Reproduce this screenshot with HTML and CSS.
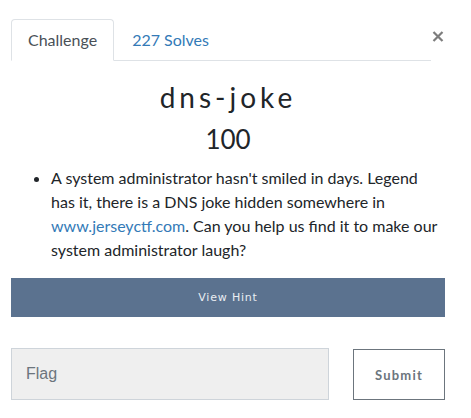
FILE: index.html
```html
<!DOCTYPE html>
<html>
<head>
<meta charset="utf-8">
<link rel="stylesheet" href="styles.css">
</head>
<body>
<div class="modal">
  <div class="tabs-row">
    <ul class="nav">
      <li class="tab active">Challenge</li>
      <li class="tab link">227 Solves</li>
    </ul>
    <button class="close" aria-label="Close">
      <svg width="12" height="11" viewBox="0 0 12 11"><path d="M1.5 1 L10.5 10 M10.5 1 L1.5 10" stroke="#7d7d7d" stroke-width="2.2" fill="none"/></svg>
    </button>
  </div>
  <h2 class="title">dns-joke</h2>
  <h3 class="value">100</h3>
  <ul class="desc">
    <li>A system administrator hasn't smiled in days. Legend has it, there is a DNS joke hidden somewhere in <a href="#">www.jerseyctf.com</a>. Can you help us find it to make our system administrator laugh?</li>
  </ul>
  <button class="hint">View Hint</button>
  <div class="flag-row">
    <input class="flag" type="text" placeholder="Flag">
    <button class="submit">Submit</button>
  </div>
</div>
</body>
</html>
```

FILE: styles.css
```css
html, body {
  margin: 0;
  padding: 0;
  background: #fff;
}
body {
  font-family: "Lato", "Liberation Sans", sans-serif;
  color: #212529;
}
.modal {
  width: 434px;
  margin-left: 11px;
  padding-top: 19px;
}
.tabs-row {
  display: flex;
  align-items: flex-start;
}
.nav {
  flex: 1;
  display: flex;
  list-style: none;
  margin: 0;
  padding: 0;
  border-bottom: 1px solid #dee2e6;
}
.tab {
  font-size: 16px;
  line-height: 24px;
  padding: 8px 16px;
  border: 1px solid transparent;
  border-top-left-radius: 4px;
  border-top-right-radius: 4px;
  margin-bottom: -1px;
}
.tab.active {
  color: #495057;
  border-color: #dee2e6 #dee2e6 #fff;
  background: #fff;
}
.tab.link {
  color: #337ab7;
  padding-left: 17px;
}
.close {
  width: 14px;
  height: 20px;
  margin-top: 7px;
  padding: 0;
  border: 0;
  background: none;
  display: flex;
  justify-content: center;
  align-items: center;
}
.title {
  margin: 19px 0 0;
  text-align: center;
  font-weight: 400;
  font-size: 28px;
  line-height: 34px;
  letter-spacing: 4px;
  color: #212529;
}
.value {
  margin: 10px 0 0;
  text-align: center;
  font-weight: 400;
  font-size: 26px;
  line-height: 31px;
  color: #212529;
}
.desc {
  margin: 11px 0 0;
  padding-left: 40px;
  font-size: 16px;
  line-height: 24px;
  color: #212529;
}
.desc a {
  color: #337ab7;
  text-decoration: none;
}
.hint {
  display: block;
  width: 100%;
  height: 39px;
  margin-top: 16px;
  border: 0;
  background: #5b728f;
  color: #e9edf2;
  font-family: "DejaVu Sans", sans-serif;
  font-size: 11px;
  letter-spacing: 0.8px;
}
.flag-row {
  display: flex;
  justify-content: space-between;
  align-items: flex-start;
  margin-top: 31px;
}
.flag {
  box-sizing: border-box;
  width: 318px;
  height: 52px;
  padding: 0 14px;
  border: 1px solid #ced4da;
  background: #efefef;
  font-family: "Liberation Sans", sans-serif;
  font-size: 16px;
  color: #495057;
  outline: none;
}
.flag::placeholder {
  color: #6c757d;
}
.submit {
  box-sizing: border-box;
  width: 92px;
  height: 51px;
  margin-top: 1px;
  border: 1px solid #6c757d;
  background: #fff;
  color: #6c757d;
  font-family: "Lato", sans-serif;
  font-weight: 700;
  font-size: 13px;
  letter-spacing: 1.2px;
}
```
